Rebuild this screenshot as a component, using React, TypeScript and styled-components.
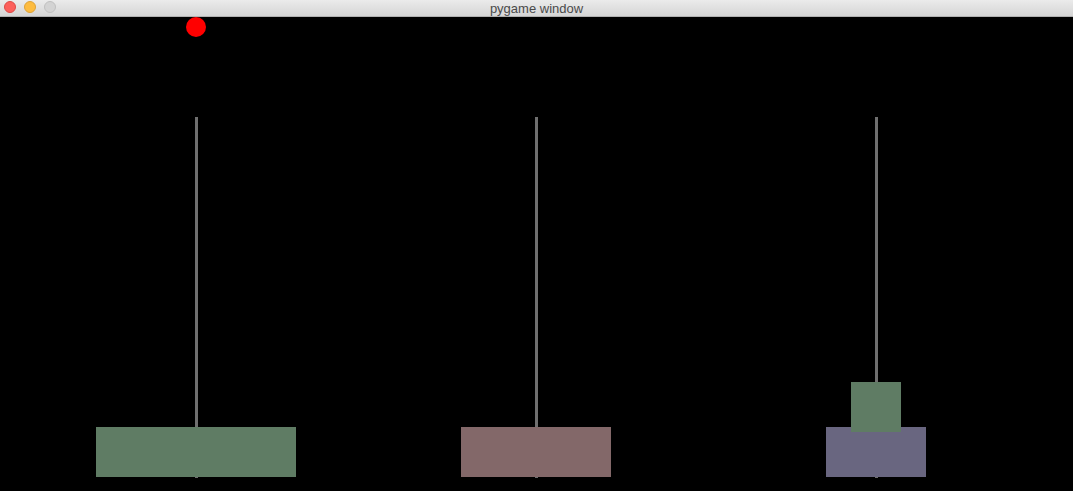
import styled, { createGlobalStyle } from "styled-components";

const GlobalStyle = createGlobalStyle`
  html, body {
    margin: 0;
    padding: 0;
    background: #000;
    overflow: hidden;
  }
`;

const Window = styled.div`
  width: 1073px;
  height: 491px;
  display: flex;
  flex-direction: column;
  background: #000;
`;

const TitleBar = styled.header`
  position: relative;
  height: 16px;
  flex-shrink: 0;
  display: flex;
  align-items: center;
  justify-content: center;
  background: linear-gradient(#ebebeb, #d5d5d5);
  border-bottom: 1px solid #b1b1b1;
  font-family: "Liberation Sans", Arial, sans-serif;
  font-size: 13px;
  color: #4a4a4a;
`;

const Lights = styled.div`
  position: absolute;
  left: 4px;
  top: 1px;
  display: flex;
  gap: 8px;
`;

const Light = styled.span<{ $color: string; $edge: string }>`
  width: 12px;
  height: 12px;
  box-sizing: border-box;
  border-radius: 50%;
  background: ${(p) => p.$color};
  border: 1px solid ${(p) => p.$edge};
`;

const Board = styled.main`
  position: relative;
  flex: 1;
  display: flex;
  padding: 0 0 14px 26px;
  box-sizing: border-box;
`;

const Ball = styled.div`
  position: absolute;
  left: 186px;
  top: 0;
  width: 20px;
  height: 20px;
  border-radius: 50%;
  background: #ff0000;
`;

const Tower = styled.section`
  position: relative;
  width: 340px;
  display: flex;
  flex-direction: column;
  align-items: center;
  justify-content: flex-end;
`;

const Peg = styled.div`
  position: absolute;
  top: 100px;
  left: 169px;
  width: 3px;
  height: 361px;
  background: #6f6f6f;
`;

const Disk = styled.div<{ $w: number; $color: string; $overlap?: number }>`
  position: relative;
  width: ${(p) => p.$w}px;
  height: 50px;
  background: ${(p) => p.$color};
  margin-bottom: ${(p) => -(p.$overlap ?? 0)}px;
  z-index: ${(p) => (p.$overlap ? 2 : 1)};
`;

const GREEN = "#5f7c64";
const ROSE = "#836869";
const PURPLE = "#696680";

type DiskSpec = { w: number; color: string; overlap?: number };

const towers: DiskSpec[][] = [
  [{ w: 200, color: GREEN }],
  [{ w: 150, color: ROSE }],
  [
    { w: 50, color: GREEN, overlap: 5 },
    { w: 100, color: PURPLE },
  ],
];

export default function App() {
  return (
    <>
      <GlobalStyle />
      <Window>
        <TitleBar>
          <Lights>
            <Light $color="#fc605c" $edge="#de4a45" />
            <Light $color="#fdbc40" $edge="#dea236" />
            <Light $color="#d3d3d3" $edge="#c0c0c0" />
          </Lights>
          pygame window
        </TitleBar>
        <Board>
          <Ball />
          {towers.map((disks, i) => (
            <Tower key={i}>
              <Peg />
              {disks.map((d, j) => (
                <Disk key={j} $w={d.w} $color={d.color} $overlap={d.overlap} />
              ))}
            </Tower>
          ))}
        </Board>
      </Window>
    </>
  );
}
